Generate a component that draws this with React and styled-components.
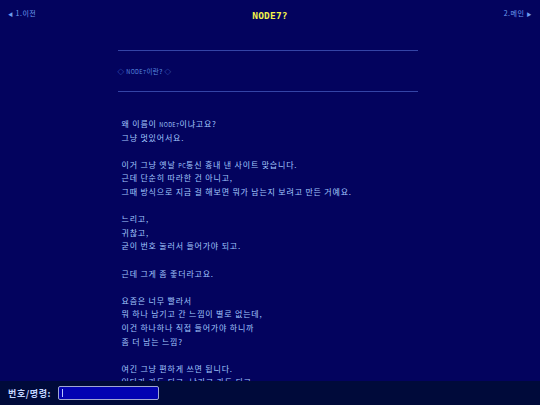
import React from "react";
import styled, { createGlobalStyle } from "styled-components";

const GlobalStyle = createGlobalStyle`
  html, body {
    margin: 0;
    padding: 0;
    background-color: #03035e;
  }
  body {
    font-family: "Noto Sans CJK KR", "Noto Sans", sans-serif;
  }
`;

const Page = styled.div`
  min-height: 100vh;
  background-color: #03035e;
  padding-bottom: 40px;
`;

const TopBar = styled.header`
  display: flex;
  justify-content: space-between;
  align-items: flex-start;
  height: 30px;
  padding: 0 8px;
  box-sizing: border-box;
`;

const NavLink = styled.span`
  margin-top: 8px;
  font-size: 7px;
  line-height: 10px;
  color: #6d9ef0;
  letter-spacing: 0.5px;
`;

const Arrow = styled.span`
  font-size: 5px;
`;

const Title = styled.h1`
  margin: 10px 0 0;
  font-family: "DejaVu Sans Mono", monospace;
  font-size: 9.5px;
  line-height: 11px;
  font-weight: 700;
  color: #f2f24a;
  letter-spacing: 0.2px;
`;

const Wrapper = styled.div`
  padding: 20px 5px 0 0;
`;

const Column = styled.main`
  width: 300px;
  margin: 0 auto;
`;

const Rule = styled.hr`
  margin: 0;
  border: none;
  border-top: 1px solid #3444a6;
`;

const SectionLabel = styled.div`
  margin: 14px 0 12px;
  font-size: 6.5px;
  line-height: 13px;
  color: #5b8fe0;
  letter-spacing: 0.4px;
`;

const Body = styled.div`
  margin-top: 25px;
  padding-left: 4px;
  font-size: 8px;
  line-height: 13.6px;
  color: #a2c8ff;
  letter-spacing: 0.8px;
`;

const Paragraph = styled.p`
  margin: 0 0 13.6px;
`;

const Line = styled.span`
  display: block;
  height: 13.6px;
  white-space: nowrap;
`;

const Small = styled.span`
  font-size: 5.5px;
  letter-spacing: 0.4px;
`;

const CommandBar = styled.footer`
  position: fixed;
  left: 0;
  right: 0;
  bottom: 0;
  height: 24px;
  display: flex;
  align-items: center;
  gap: 7px;
  padding: 0 8px;
  background-color: #000a3a;
`;

const CommandLabel = styled.label`
  font-size: 9px;
  font-weight: 700;
  color: #c4d6ff;
  letter-spacing: 0.6px;
`;

const InputBox = styled.div`
  width: 101px;
  height: 14px;
  box-sizing: border-box;
  display: flex;
  align-items: center;
  padding-left: 3px;
  background-color: #0202b2;
  border: 1px solid #a0a6d4;
  border-radius: 2px;
`;

const Cursor = styled.span`
  width: 1px;
  height: 8px;
  background-color: #b8c4ff;
`;

const paragraphs = [
  [
    <>왜 이름이 <Small>NODE7</Small>이냐고요?</>,
    "그냥 멋있어서요.",
  ],
  [
    <>이거 그냥 옛날 <Small>PC</Small>통신 흉내 낸 사이트 맞습니다.</>,
    "근데 단순히 따라한 건 아니고,",
    "그때 방식으로 지금 걸 해보면 뭐가 남는지 보려고 만든 거예요.",
  ],
  ["느리고,", "귀찮고,", "굳이 번호 눌러서 들어가야 되고."],
  ["근데 그게 좀 좋더라고요."],
  [
    "요즘은 너무 빨라서",
    "뭐 하나 남기고 간 느낌이 별로 없는데,",
    "이건 하나하나 직접 들어가야 하니까",
    "좀 더 남는 느낌?",
  ],
  ["여긴 그냥 편하게 쓰면 됩니다.", "읽다가 가도 되고, 남기고 가도 되고."],
];

export default function App() {
  return (
    <>
      <GlobalStyle />
      <Page>
        <TopBar>
          <NavLink><Arrow>◀</Arrow> 1.이전</NavLink>
          <Title>NODE7?</Title>
          <NavLink>2.메인 <Arrow>▶</Arrow></NavLink>
        </TopBar>
        <Wrapper>
          <Column>
            <Rule />
            <SectionLabel>◇ <Small>NODE7</Small>이란? ◇</SectionLabel>
            <Rule />
            <Body>
              {paragraphs.map((lines, i) => (
                <Paragraph key={i}>
                  {lines.map((line, j) => (
                    <Line key={j}>{line}</Line>
                  ))}
                </Paragraph>
              ))}
            </Body>
          </Column>
        </Wrapper>
        <CommandBar>
          <CommandLabel>번호/명령:</CommandLabel>
          <InputBox>
            <Cursor />
          </InputBox>
        </CommandBar>
      </Page>
    </>
  );
}
